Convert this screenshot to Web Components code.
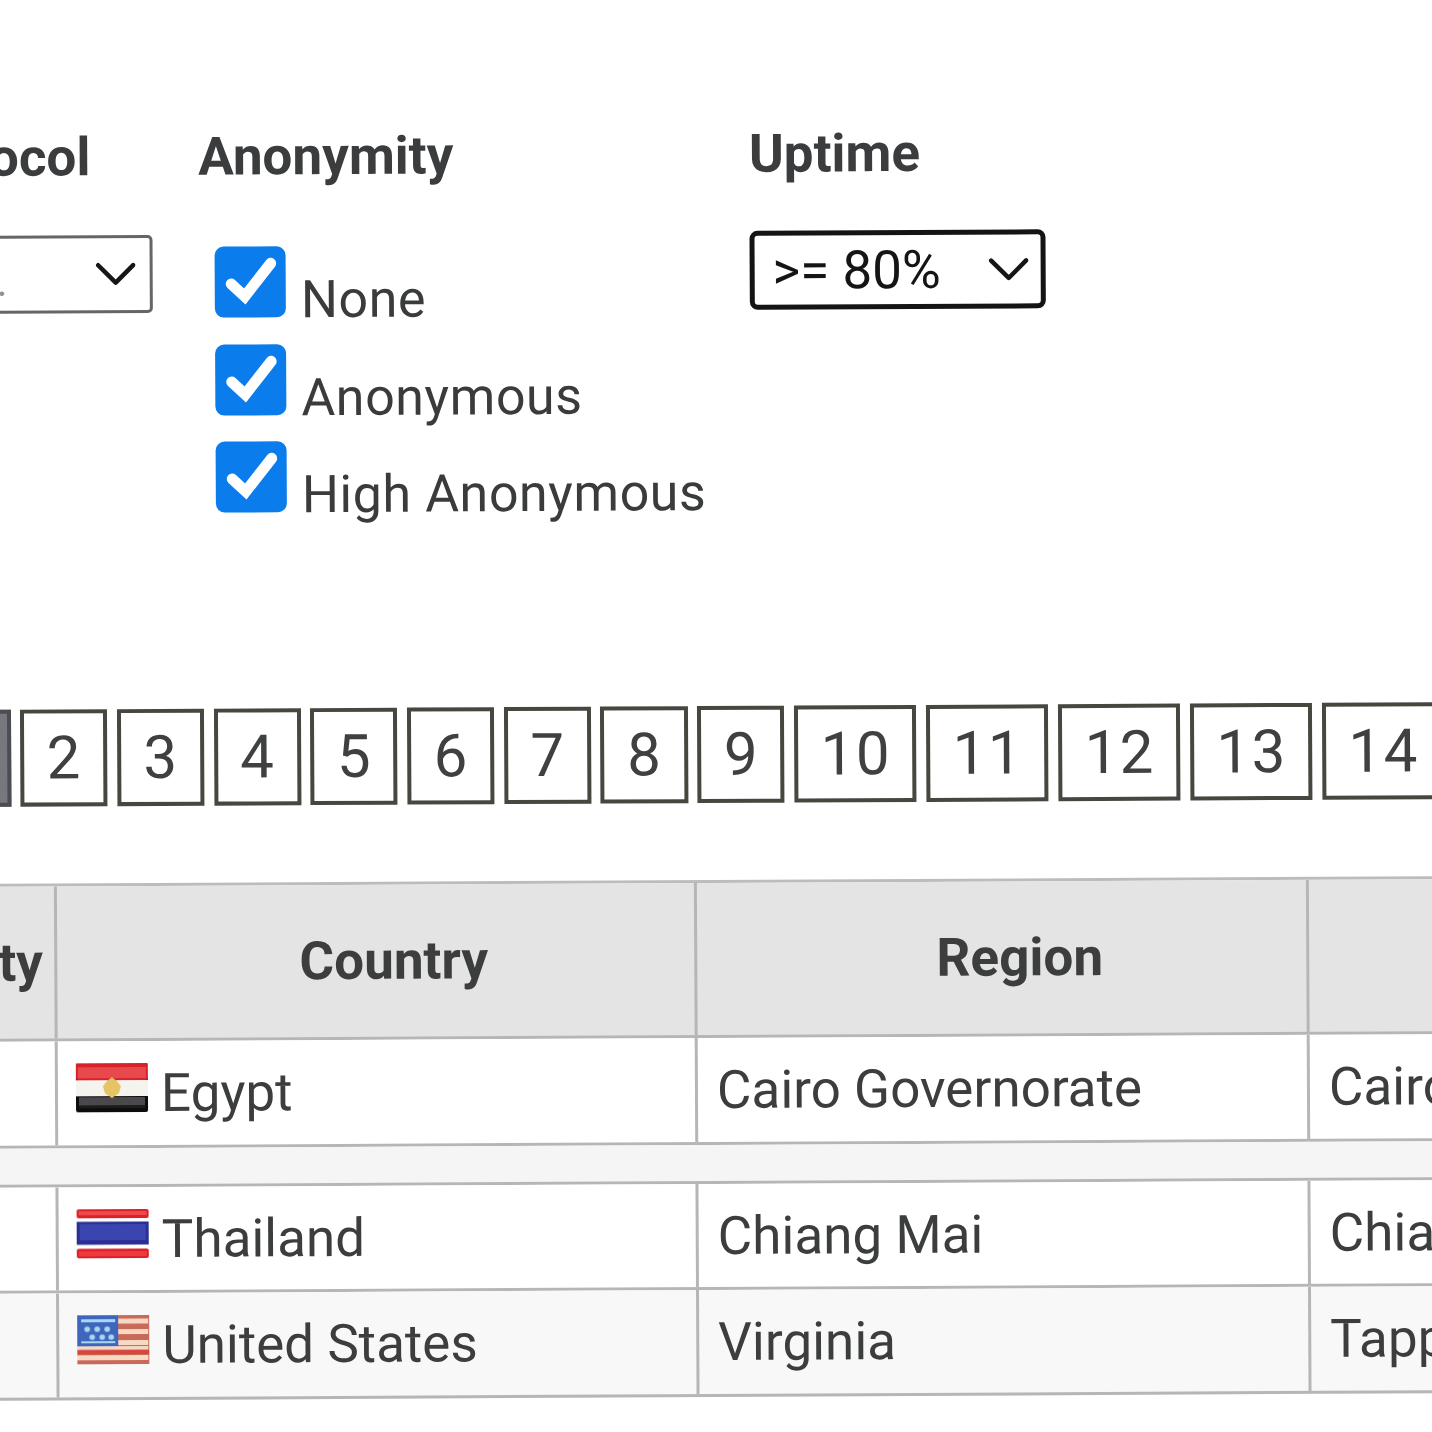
<!DOCTYPE html>
<html>
<head>
<meta charset="utf-8">
<title>Proxy list</title>
<style>
  html, body { margin: 0; height: 100%; overflow: hidden; background: #fff; }
  body { font-family: Roboto, "Liberation Sans", sans-serif; color: #3a3c3c; }
</style>
</head>
<body>
<proxy-page>
  <filter-bar>
    <filter-group heading="Protocol"><filter-select value="." inset="104" muted></filter-select></filter-group>
    <filter-group heading="Anonymity">
      <check-row>None</check-row>
      <check-row>Anonymous</check-row>
      <check-row>High Anonymous</check-row>
    </filter-group>
    <filter-group heading="Uptime"><filter-select value="&gt;= 80%" inset="18" strong></filter-select></filter-group>
  </filter-bar>
  <page-list>
    <page-button active>1</page-button>
    <page-button>2</page-button>
    <page-button>3</page-button>
    <page-button>4</page-button>
    <page-button>5</page-button>
    <page-button>6</page-button>
    <page-button>7</page-button>
    <page-button>8</page-button>
    <page-button>9</page-button>
    <page-button>10</page-button>
    <page-button>11</page-button>
    <page-button>12</page-button>
    <page-button>13</page-button>
    <page-button>14</page-button>
  </page-list>
  <proxy-table>
    <proxy-row kind="head">
      <span>Anonymity</span><span>Country</span><span>Region</span><span></span>
    </proxy-row>
    <proxy-row kind="first">
      <span></span><span><country-flag code="eg"></country-flag>Egypt</span><span>Cairo Governorate</span><span>Cairo</span>
    </proxy-row>
    <proxy-row kind="spacer"></proxy-row>
    <proxy-row>
      <span></span><span><country-flag code="th"></country-flag>Thailand</span><span>Chiang Mai</span><span>Chiang Mai</span>
    </proxy-row>
    <proxy-row kind="striped">
      <span></span><span><country-flag code="us"></country-flag>United States</span><span>Virginia</span><span>Tappahannock</span>
    </proxy-row>
  </proxy-table>
</proxy-page>

<script>
(function() {
  function define(name, css, html, init) {
    class El extends HTMLElement {
      constructor() {
        super();
        this.attachShadow({ mode: 'open' });
        this.shadowRoot.innerHTML = '<style>' + css + '</style>' + html;
      }
      connectedCallback() {
        if (init) init(this);
      }
    }
    if (!customElements.get(name)) customElements.define(name, El);
  }

  // the whole photo sits very slightly tilted
  define('proxy-page', `
    :host { display: block; width: 1432px; height: 1432px; padding-top: 124px; box-sizing: border-box;
      transform: rotate(-0.3deg); transform-origin: 716px 716px; }
  `, '<slot></slot>');

  define('filter-bar', `
    :host { display: grid; grid-template-columns: 262.6px 504.4px auto; column-gap: 46.4px; margin-left: -108px; }
  `, '<slot></slot>');

  define('filter-group', `
    :host { display: block; }
    h3 { margin: 0 0 48px; font-size: 53px; line-height: 60px; font-weight: 700; color: #3a3c3e; white-space: nowrap; }
  `, '<h3></h3><slot></slot>', el => {
    el.shadowRoot.querySelector('h3').textContent = el.getAttribute('heading');
  });

  define('filter-select', `
    :host { display: flex; align-items: center; justify-content: space-between; box-sizing: border-box; height: 78px;
      border: 3px solid #666; border-radius: 5px; padding-right: 14px; font-size: 53px; color: #151515; background: #fff; }
    :host([strong]) { width: 296px; height: 79px; margin-top: -1px; border: 5px solid #141416; border-radius: 8px; padding-right: 12px; }
    :host([muted]) .v { color: #8a8f9c; align-self: flex-end; line-height: 56px; font-size: 40px; }
    svg { width: 40px; height: 24px; display: block; }
  `, '<span class="v"></span><svg viewBox="0 0 40 24"><path d="M2.5 3 L20 20.5 L37.5 3" fill="none" stroke="#161618" stroke-width="4.5" stroke-linecap="round" stroke-linejoin="round"/></svg>', el => {
    const v = el.shadowRoot.querySelector('.v');
    v.textContent = el.getAttribute('value');
    v.style.paddingLeft = el.getAttribute('inset') + 'px';
  });

  define('check-row', `
    :host { display: block; height: 97.7px; margin-left: 16px; padding-top: 12px; box-sizing: border-box; white-space: nowrap;
      font-size: 52px; line-height: 71px; color: #3a3c3c; letter-spacing: .55px; }
    .box { display: inline-block; vertical-align: baseline; width: 71px; height: 71px; margin-right: 15px; border-radius: 9px; background: #0a7cec; }
    svg { display: block; width: 71px; height: 71px; }
  `, '<span class="box"><svg viewBox="0 0 71 71"><path d="M16.5 37.5 L30 50 L56 17" fill="none" stroke="#fff" stroke-width="11" stroke-linecap="round" stroke-linejoin="miter"/></svg></span><slot></slot>');

  define('page-list', `
    :host { display: flex; gap: 9.5px; margin: 181px 0 0 -76.7px; white-space: nowrap; }
  `, '<slot></slot>');

  define('page-button', `
    :host { display: block; flex: none; box-sizing: border-box; height: 97px; padding: 0 21.5px 0 22.5px; border: 4px solid #46483f;
      font-size: 60px; line-height: 89px; letter-spacing: 1.5px; color: #3f4140; background: #fff; }
    :host([active]) { background: #77777e; color: #fff; border-color: #4c4c54; }
  `, '<slot></slot>');

  define('proxy-table', `
    :host { display: block; width: 1930px; margin: 77px 0 0 -225px; border-top: 3px solid #bcbcbc; }
  `, '<slot></slot>');

  const rowCss = `
    :host { display: grid; grid-template-columns: 278px 640px 612px 400px; height: 106px; box-sizing: border-box;
      border-bottom: 3px solid #b6b6b6; background: #fff; font-size: 53px; color: #3c3e3e; }
    :host([kind="head"]) { height: 155px; background: #e4e4e4; font-weight: 700; }
    :host([kind="first"]) { height: 107px; }
    :host([kind="spacer"]) { height: 39px; background: #f5f5f5; display: block; }
    :host([kind="striped"]) { height: 107px; background: #f8f8f8; }
    ::slotted(span) { display: flex; align-items: center; box-sizing: border-box; padding-left: 19px; white-space: nowrap; border-left: 3px solid #b6b6b6; }
    ::slotted(span:first-child) { border-left: 0; }
  `;
  define('proxy-row', rowCss, '<slot></slot>', el => {
    const kind = el.getAttribute('kind');
    if (kind === 'head') {
      [...el.children].forEach((c, i) => {
        c.style.justifyContent = 'center';
        c.style.paddingLeft = i ? '36px' : '0';
      });
    }
  });

  const FLAGS = {
    eg: `<rect width="72" height="49" rx="2" fill="#0c0c0e"/>
      <rect width="72" height="17" rx="2" fill="#d8222a"/><rect x="2" y="4" width="68" height="11" fill="#e8494c"/>
      <rect y="17" width="72" height="16" fill="#f4f3ee"/>
      <rect x="3" y="34" width="66" height="8" fill="#4a484a"/><rect x="3" y="42" width="66" height="3" fill="#1c1c1e"/>
      <path d="M36 14 L41 18 L45 23 L43 30 L36 35 L29 30 L27 23 L31 18Z" fill="#e6c465"/>`,
    th: `<rect width="72" height="49" rx="2" fill="#fff"/>
      <rect width="72" height="9" rx="2" fill="#dd1f28"/><rect x="2" y="2" width="68" height="4" fill="#ee4a4c"/>
      <rect y="12.5" width="72" height="23" fill="#2a2f94"/><rect x="3" y="15" width="66" height="16" fill="#3a45b0"/>
      <rect y="39.5" width="72" height="9.5" rx="2" fill="#dd1f28"/><rect x="2" y="42" width="68" height="5" fill="#ee3a3c"/>`,
    us: `<rect width="72" height="49" fill="#c96a58"/>
      <g fill="#f6d8c4"><rect x="41" y="3.5" width="30" height="5"/><rect x="41" y="14" width="30" height="5"/><rect x="41" y="25" width="30" height="5"/><rect y="31" width="71" height="3.5"/><rect y="40" width="71" height="5"/></g>
      <rect y="35" width="72" height="4" fill="#d8453c"/>
      <rect width="41" height="31" fill="#3f66bd"/>
      <g fill="#a9d7f0"><rect x="4" y="4" width="34" height="3"/><rect x="4" y="26" width="34" height="2"/>
      <circle cx="10" cy="14" r="2.8"/><circle cx="20" cy="14" r="2.8"/><circle cx="30" cy="14" r="2.8"/>
      <circle cx="15" cy="22" r="2.8"/><circle cx="25" cy="22" r="2.8"/><circle cx="34" cy="22" r="2.8"/></g>`
  };

  define('country-flag', `
    :host { display: inline-block; width: 72px; height: 49px; margin: 0 13px 0 -1px; flex: none; position: relative; top: -5.5px; }
    svg { display: block; width: 72px; height: 49px; filter: blur(.4px); }
  `, '<svg viewBox="0 0 72 49"></svg>', el => {
    el.shadowRoot.querySelector('svg').innerHTML = FLAGS[el.getAttribute('code')];
  });
})();
</script>
</body>
</html>
